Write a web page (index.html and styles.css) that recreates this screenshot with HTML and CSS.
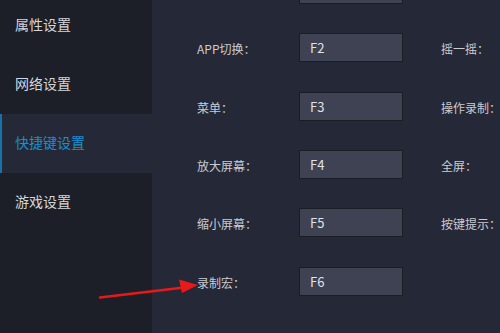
FILE: index.html
```html
<!DOCTYPE html>
<html lang="zh-CN">
<head>
  <meta charset="utf-8" />
  <title>快捷键设置</title>
  <link rel="stylesheet" href="styles.css">
</head>
<body>
  <div class="app">
    <nav class="sidebar">
      <div class="nav-item">属性设置</div>
      <div class="nav-item">网络设置</div>
      <div class="nav-item active">快捷键设置</div>
      <div class="nav-item">游戏设置</div>
    </nav>

    <main class="content">
      <div class="row">
        <span class="label"></span>
        <div class="key"></div>
        <span class="label right"></span>
      </div>
      <div class="row">
        <span class="label">APP切换：</span>
        <div class="key">F2</div>
        <span class="label right">摇一摇：</span>
      </div>
      <div class="row">
        <span class="label">菜单：</span>
        <div class="key">F3</div>
        <span class="label right">操作录制：</span>
      </div>
      <div class="row">
        <span class="label">放大屏幕：</span>
        <div class="key">F4</div>
        <span class="label right">全屏：</span>
      </div>
      <div class="row">
        <span class="label">缩小屏幕：</span>
        <div class="key">F5</div>
        <span class="label right">按键提示：</span>
      </div>
      <div class="row">
        <span class="label">录制宏：</span>
        <div class="key">F6</div>
        <span class="label right"></span>
      </div>
    </main>
  </div>

  <!-- annotation arrow -->
  <svg class="arrow" width="500" height="333" viewBox="0 0 500 333">
    <line x1="100" y1="297.5" x2="184" y2="287.5" stroke="#e8191a" stroke-width="2.6" stroke-linecap="round" />
    <polygon points="198,285 179,279.5 182,293" fill="#e8191a" />
  </svg>
</body>
</html>
```

FILE: styles.css
```css
html, body {
  margin: 0;
  padding: 0;
  width: 500px;
  height: 333px;
  overflow: hidden;
  background: #252836;
  font-family: "Noto Sans CJK SC", "Noto Sans", sans-serif;
}
.app {
  display: flex;
  height: 333px;
}
.sidebar {
  width: 152px;
  flex-shrink: 0;
  background: #1c1f27;
  margin-top: -4px;
  height: 337px;
}
.nav-item {
  height: 59px;
  box-sizing: border-box;
  display: flex;
  align-items: center;
  padding-left: 15px;
  padding-bottom: 3px;
  font-size: 14px;
  color: #d3d6dc;
}
.nav-item.active {
  background: #252836;
  color: #1a8ed0;
  border-left: 2px solid #1673a8;
  padding-left: 13px;
}
.content {
  flex: 1;
  min-width: 0;
  padding-left: 45px;
  margin-top: -39.6px;
}
.row {
  display: flex;
  align-items: center;
  height: 58.3px;
}
.label {
  width: 102px;
  flex-shrink: 0;
  padding-top: 2px;
  font-size: 12px;
  color: #c9ccd3;
  white-space: nowrap;
}
.label.right {
  margin-left: 38px;
}
.key {
  width: 104px;
  height: 29px;
  box-sizing: border-box;
  border: 1px solid #1a1d24;
  background: #3e4253;
  color: #dfe2e8;
  font-size: 13px;
  line-height: 27px;
  padding-left: 10px;
  flex-shrink: 0;
}
.arrow {
  position: absolute;
  left: 0;
  top: 0;
  pointer-events: none;
}
```
